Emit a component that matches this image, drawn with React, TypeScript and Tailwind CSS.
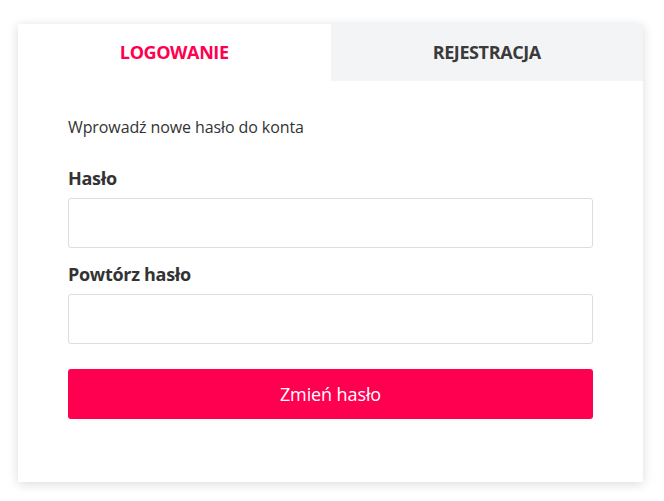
import React from 'react';

export default function App() {
  return (
    <div className="min-h-screen bg-white pt-[24px] px-[18px]" style={{ fontFamily: '"Open Sans", "Noto Sans", sans-serif' }}>
      <div className="w-[625px] bg-white shadow-[0_2px_10px_rgba(0,0,0,0.15)]">
        {/* Tabs */}
        <div className="grid grid-cols-2 h-[57px]">
          <button className="flex items-center justify-center bg-white text-[18px] tracking-[-0.4px] font-bold text-[#ff0050]">
            LOGOWANIE
          </button>
          <button className="flex items-center justify-center bg-[#f3f4f6] text-[18px] tracking-[-0.4px] font-bold text-[#3a3a3a]">
            REJESTRACJA
          </button>
        </div>

        {/* Form */}
        <div className="px-[50px] pt-[36px] pb-[63px]">
          <p className="text-[16px] leading-[20px] tracking-[-0.1px] text-[#333]">Wprowadź nowe hasło do konta</p>

          <label className="block mt-[29px] text-[18px] leading-[24px] tracking-[-0.3px] font-bold text-[#333]">Hasło</label>
          <input type="password" className="block mt-[8px] w-full h-[50px] border border-[#dcdde1] rounded-[3px] outline-none" />

          <label className="block mt-[14px] text-[18px] leading-[24px] tracking-[-0.3px] font-bold text-[#333]">Powtórz hasło</label>
          <input type="password" className="block mt-[8px] w-full h-[50px] border border-[#dcdde1] rounded-[3px] outline-none" />

          <button className="mt-[25px] w-full h-[50px] rounded-[3px] bg-[#ff0050] text-white text-[18px] tracking-[-0.1px]">
            Zmień hasło
          </button>
        </div>
      </div>
    </div>
  );
}
